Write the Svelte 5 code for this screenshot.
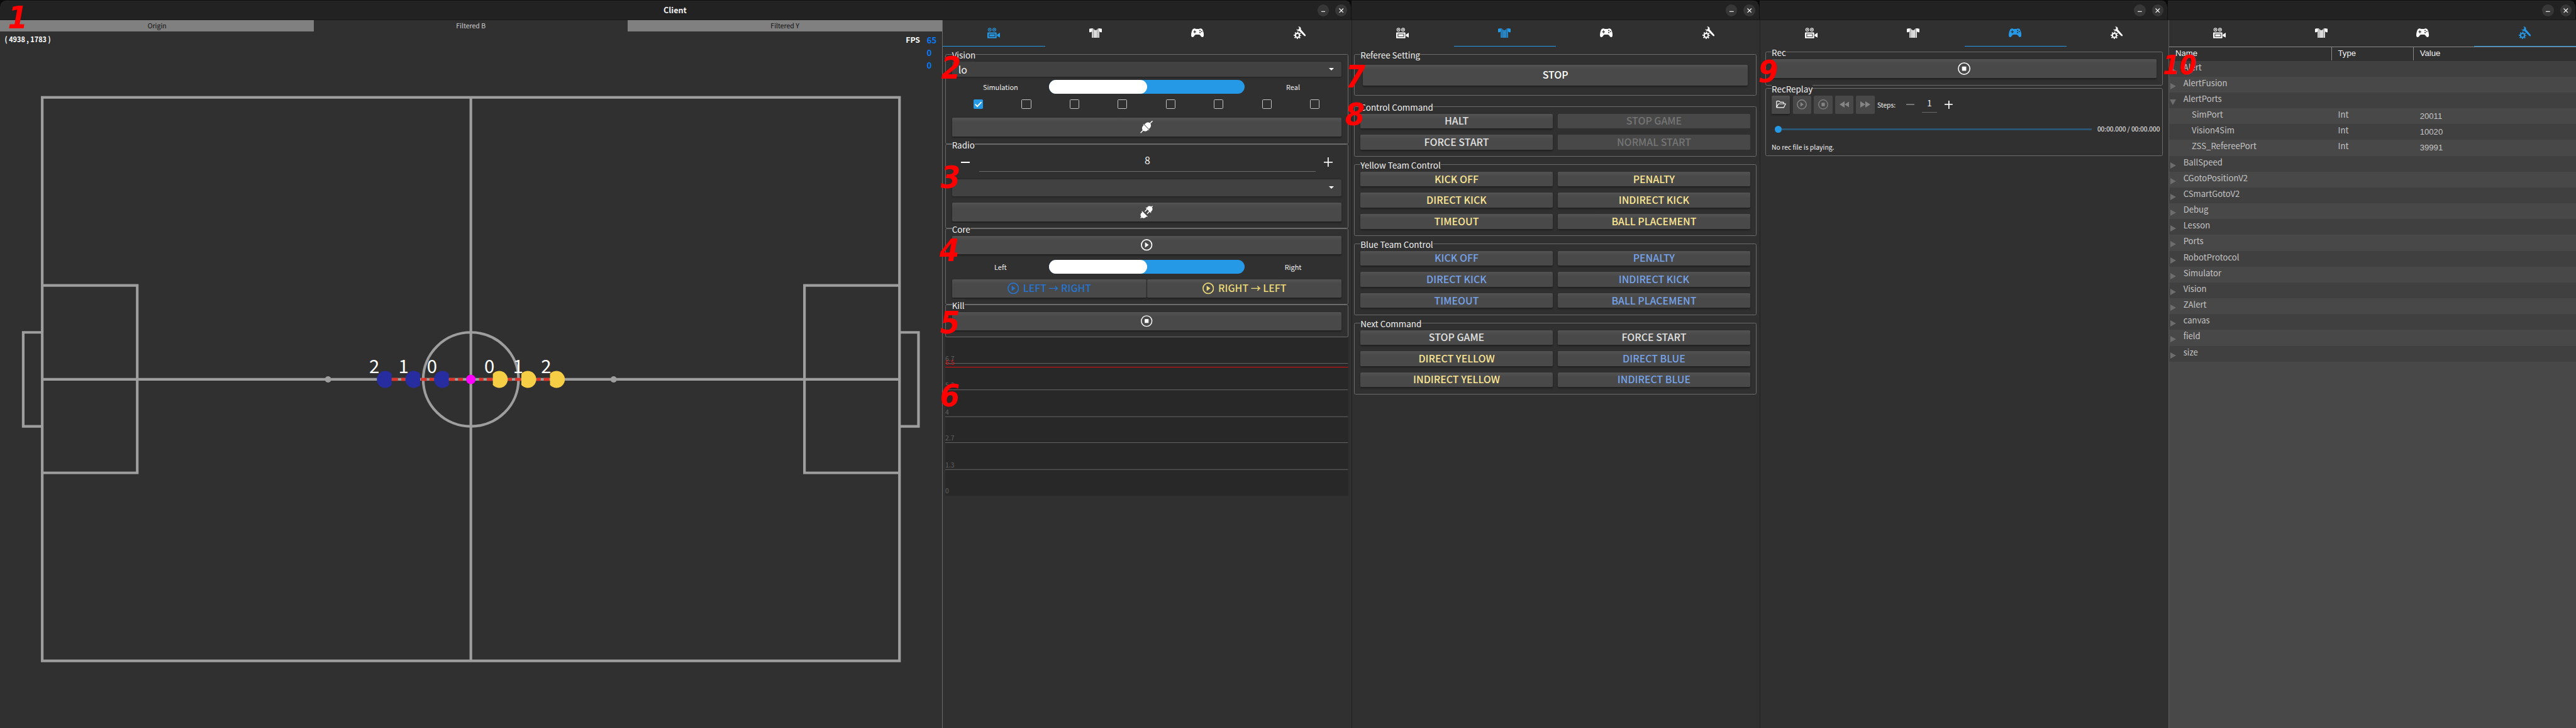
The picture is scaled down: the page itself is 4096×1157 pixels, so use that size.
<script>
  const titles = [
    { cls: 'wide', title: true },
    { cls: 'std', title: false },
    { cls: 'std', title: false },
    { cls: 'std', title: false }
  ];
  const tabIcons = ['camera', 'jersey', 'gamepad', 'tools'];
  const checks = [true, false, false, false, false, false, false, false];

  const refGroups = [
    {
      name: 'Control Command', cls: 'g-control',
      buttons: [['HALT', 'plain'], ['STOP GAME', 'off'], ['FORCE START', 'plain'], ['NORMAL START', 'off']]
    },
    {
      name: 'Yellow Team Control', cls: 'g-team',
      buttons: [['KICK OFF', 'yellow'], ['PENALTY', 'yellow'], ['DIRECT KICK', 'yellow'], ['INDIRECT KICK', 'yellow'], ['TIMEOUT', 'yellow'], ['BALL PLACEMENT', 'yellow']]
    },
    {
      name: 'Blue Team Control', cls: 'g-team',
      buttons: [['KICK OFF', 'blue'], ['PENALTY', 'blue'], ['DIRECT KICK', 'blue'], ['INDIRECT KICK', 'blue'], ['TIMEOUT', 'blue'], ['BALL PLACEMENT', 'blue']]
    },
    {
      name: 'Next Command', cls: 'g-team',
      buttons: [['STOP GAME', 'plain'], ['FORCE START', 'plain'], ['DIRECT YELLOW', 'yellow'], ['DIRECT BLUE', 'blue'], ['INDIRECT YELLOW', 'yellow'], ['INDIRECT BLUE', 'blue']]
    }
  ];

  const tree = [
    { n: 'Alert' }, { n: 'AlertFusion' }, { n: 'AlertPorts', open: true },
    { n: 'SimPort', t: 'Int', v: '20011' }, { n: 'Vision4Sim', t: 'Int', v: '10020' }, { n: 'ZSS_RefereePort', t: 'Int', v: '39991' },
    { n: 'BallSpeed' }, { n: 'CGotoPositionV2' }, { n: 'CSmartGotoV2' }, { n: 'Debug' }, { n: 'Lesson' }, { n: 'Ports' },
    { n: 'RobotProtocol' }, { n: 'Simulator' }, { n: 'Vision' }, { n: 'ZAlert' }, { n: 'canvas' }, { n: 'field' }, { n: 'size' }
  ];

  const robots = [
    { x: 729.7, id: 2, lx: 709, team: 'b' }, { x: 783.7, id: 1, lx: 764.5, team: 'b' }, { x: 838, id: 0, lx: 818.5, team: 'b' },
    { x: 946, id: 0, lx: 927, team: 'y' }, { x: 1000, id: 1, lx: 981.5, team: 'y' }, { x: 1054.3, id: 2, lx: 1034.5, team: 'y' }
  ];
  const dashes = [[742, 12], [760, 8], [797.5, 11], [813.5, 8.5], [851, 11], [867.5, 9.5], [907.5, 8.5], [922, 11.5], [962, 8], [976, 11], [1016, 8.5], [1030, 11]];

  const levels = [[49.5, '6.7'], [99.5, '5.3'], [150.5, '4'], [199.5, '2.7'], [250.5, '1.3'], [300, '0']];

  const marks = [
    { t: '1', x: 15, y: 54 }, { t: '2', x: 1783, y: 149 }, { t: '3', x: 1782, y: 356 }, { t: '4', x: 1780, y: 494 },
    { t: '5', x: 1781, y: 632 }, { t: '6', x: 1781, y: 770 }, { t: '7', x: 2549, y: 166 }, { t: '8', x: 2548, y: 237 },
    { t: '9', x: 3331, y: 156 }, { t: '10', x: 4097, y: 140, small: true }
  ];
</script>

{#snippet icon(name)}
  {#if name === 'camera'}
    <svg class="ic" width="24" height="20" viewBox="0 0 24 20">
      <g fill="none" stroke="currentColor"><circle cx="4.4" cy="3.7" r="2.9" stroke-width="1.3" /><circle cx="13" cy="3.7" r="2.9" stroke-width="1.3" /></g>
      <g fill="currentColor"><circle cx="4.4" cy="3.7" r="1.2" /><circle cx="13" cy="3.7" r="1.2" />
      <path fill-rule="evenodd" d="M1 9h15.500q1 0 1 1v9q0 1-1 1H1q-1 0-1-1v-9q0-1 1-1zM2.800 11.300v6.400h12.200v-6.400zM4 12.500h9.800v4H4z" />
      <path d="M18.300 13l5.700-3.500v9.500l-5.700-3.200z" /></g>
    </svg>
  {:else if name === 'jersey'}
    <svg class="ic" width="24" height="18" viewBox="0 0 24 18">
      <g fill="currentColor"><path d="M0 1L5 0v6L3 7.500H0z" /><path d="M24 1L19 0v6l2 1.500h3z" />
      <path d="M5.200 .2L6.800 0v18H5.200z" /><path d="M18.800 .2L17.200 0v18h1.600z" />
      <path d="M8.400 1.400l1.800 2V18H8.400zM11.100 3.500h1.800V18h-1.800zM15.600 1.400l-1.800 2V18h1.800z" /></g>
      <path fill="currentColor" opacity=".4" d="M5 .3L7.500 0 10 3.300h4L16.500 0l2.500.3V18H5z" />
    </svg>
  {:else if name === 'gamepad'}
    <svg class="ic" width="24" height="17" viewBox="0 0 24 17">
      <path fill="currentColor" fill-rule="evenodd" d="M3.200 1.600C5 .2 7.500-.2 9 1.300h6C16.500-.2 19 .2 20.800 1.600 22.500 4 24 9 24 13c0 3-2 4.500-4 3.500-1.700-1.200-2.500-4-4.500-4.700h-7C6.500 12.500 5.700 15.300 4 16.500 2 17.500 0 16 0 13 0 9 1.500 4 3.200 1.600zM6.100 4v1.900H4.200v1.400h1.900v1.900h1.400V7.300h1.900V5.900H7.500V4zM16.800 3a1.100 1.100 0 1 0 .01 0zM16.800 7a1.100 1.100 0 1 0 .01 0zM20 5a1.100 1.100 0 1 0 .01 0z" />
    </svg>
  {:else if name === 'tools'}
    <svg class="ic" width="23" height="24" viewBox="0 0 23 24">
      <circle cx="7.200" cy="17" r="3.900" fill="none" stroke="currentColor" stroke-width="2.600" />
      <circle cx="7.200" cy="17" r="6" fill="none" stroke="currentColor" stroke-width="2.200" stroke-dasharray="2.300 2.412" stroke-dashoffset="1.150" />
      <path fill="currentColor" d="M8.500.5C11 0 13.500 1.500 13.800 4.200l-.2 1.600L22.600 16q.8 1.400-.3 2.200-1.200.6-2.200-.2L10.600 8.500C8 9 5.800 7.600 5.300 5.200L8 6.200l2.200-1.400.2-2.600z" />
    </svg>
  {:else if name === 'plugOn'}
    <svg class="ic" width="24" height="24" viewBox="0 0 24 24">
      <g transform="translate(12 11.500) rotate(-45)" fill="currentColor" stroke="currentColor">
        <path d="M-16 0H-7M7 0H16" stroke-width="1.700" />
        <path stroke="none" d="M-.5-8v16h-1V6H-3.500C-7 6-9.500 3-9.500 0S-7-6-3.500-6h2V-8z" />
        <path stroke="none" d="M.4-6H3C7-6 9.500-3 9.500 0S7 6 3 6H.4z" />
      </g>
    </svg>
  {:else if name === 'plugOff'}
    <svg class="ic" width="24" height="24" viewBox="0 0 24 24">
      <g transform="translate(12 12) rotate(-45)" fill="currentColor" stroke="currentColor">
        <path d="M-16 0h4M12 0h4" stroke-width="1.700" />
        <path stroke="none" d="M-4.500-7.500v15h-1.200V5.800H-8C-11.500 5.800-13.500 3-13.500 0S-11.500-5.800-8-5.800h2.300v-1.700z" />
        <path stroke="none" d="M4.500-7v14h1.200V5.500H8c3.500 0 5.500-2.500 5.500-5.500S11.500-5.500 8-5.500H5.700V-7z" />
        <path d="M-1.500-3H5M-1.500 3H5" stroke-width="1.800" />
      </g>
    </svg>
  {:else if name === 'play'}
    <svg class="ic" width="22" height="22" viewBox="0 0 22 22">
      <circle cx="11" cy="11" r="9.900" fill="none" stroke="currentColor" stroke-width="2" /><path fill="currentColor" d="M8 6l7 5-7 5z" />
    </svg>
  {:else if name === 'stop'}
    <svg class="ic" width="22" height="22" viewBox="0 0 22 22">
      <circle cx="11" cy="11" r="10" fill="none" stroke="currentColor" stroke-width="1.700" /><rect x="7.300" y="7.300" width="7.400" height="7.400" rx="1" fill="currentColor" />
    </svg>
  {:else if name === 'folder'}
    <svg class="ic" width="19" height="14" viewBox="0 0 19 14">
      <path fill="none" stroke="currentColor" stroke-width="1.400" stroke-linejoin="round" d="M1 12.800V2q0-1.200 1.200-1.200h3.600l2 2h5.700q1 0 1 1v2M1 12.800L4.600 6h13.600L14.500 13H1.600z" />
    </svg>
  {:else if name === 'back'}
    <svg class="ic" width="19" height="12" viewBox="0 0 19 12"><path fill="currentColor" d="M9.500 0v12L0 6zM19 0v12L9.500 6z" /></svg>
  {:else if name === 'fwd'}
    <svg class="ic" width="19" height="12" viewBox="0 0 19 12"><path fill="currentColor" d="M0 0v12l9.500-6zM9.500 0v12L19 6z" /></svg>
  {/if}
{/snippet}

{#snippet tabs(active)}
  <nav class="tabs">
    {#each tabIcons as t, i}
      <div class="tab" class:active={i === active}>{@render icon(t)}</div>
    {/each}
  </nav>
{/snippet}

{#snippet toggle(left, right)}
  <div class="toggle-row"><span>{left}</span><div class="toggle"><div class="thumb"></div></div><span>{right}</span></div>
{/snippet}

<div class="screen">
  <header class="titles">
    {#each titles as w}
      <div class="titlebar {w.cls}">
        {#if w.title}<span class="title">Client</span>{/if}
        <div class="winbtns">
          <span class="wb"><svg width="8" height="10" viewBox="0 0 8 10"><path d="M0 7.500h8" stroke="#fff" stroke-width="1.300" /></svg></span>
          <span class="wb"><svg width="9" height="9" viewBox="0 0 9 9"><path d="M.6.6l7.800 7.800M8.400.6L.6 8.400" stroke="#fff" stroke-width="1.400" /></svg></span>
        </div>
      </div>
    {/each}
  </header>

  <main class="body">
    <section class="field">
      <div class="views"><div>Origin</div><div class="sel">Filtered B</div><div>Filtered Y</div></div>
      <svg class="pitch" width="1785" height="1321" viewBox="0 58 1785 1321">
        <g fill="none" stroke="#9e9e9e" stroke-width="5">
          <rect x="80" y="184" width="1624" height="1067" />
          <path d="M892 184V1251M80 718H1704M80 540H260V895H80M1704 540H1524V895H1704M80 629H44V807H80M1704 629H1740V807H1704" />
          <ellipse cx="892" cy="718" rx="90.300" ry="89" />
        </g>
        <circle cx="621.500" cy="718" r="6" fill="#9e9e9e" /><circle cx="1162.500" cy="718" r="6" fill="#9e9e9e" />
        {#each dashes as d}<rect x={d[0]} y="715.200" width={d[1]} height="5.600" fill="#dd352c" />{/each}
        {#each robots as r}
          {#if r.team === 'b'}
            <path fill="#272c9e" d="M{r.x + 12.3} 707.500A16 16 0 1 0 {r.x + 12.3} 728.500Z" />
          {:else}
            <path fill="#f5ce46" d="M{r.x - 12.3} 707.500A16 16 0 1 1 {r.x - 12.3} 728.500Z" />
          {/if}
          <text x={r.lx} y="706" class="rid">{r.id}</text>
        {/each}
        <circle cx="892" cy="718" r="9" fill="#f0f" />
        <text x="9" y="80" class="info" textLength="87" lengthAdjust="spacingAndGlyphs">( 4938 , 1783 )</text>
        <text x="1716" y="81" class="info">FPS</text>
        <text x="1755.500" y="82" class="num">65</text><text x="1755.500" y="106" class="num">0</text><text x="1755.500" y="130" class="num">0</text>
      </svg>
    </section>

    <section class="panel p1">
      {@render tabs(0)}
      <div class="group g-vision">
        <span class="legend">Vision</span>
        <div class="combo c1"><span>lo</span><i class="caret"></i></div>
        {@render toggle('Simulation', 'Real')}
        <div class="checks">
          {#each checks as c}
            <div class="cell"><span class="box" class:on={c}>{#if c}<svg width="18" height="18" viewBox="0 0 18 18"><path d="M3.200 9.200l3.900 4L15 5" fill="none" stroke="#fff" stroke-width="2.200" /></svg>{/if}</span></div>
          {/each}
        </div>
        <button class="btn h36">{@render icon('plugOn')}</button>
      </div>
      <div class="group g-radio">
        <span class="legend">Radio</span>
        <div class="spin">
          <span class="minus"></span><span class="val">8</span><span class="plus"></span>
        </div>
        <div class="combo c2"><span></span><i class="caret"></i></div>
        <button class="btn h36">{@render icon('plugOff')}</button>
      </div>
      <div class="group g-core">
        <span class="legend">Core</span>
        <button class="btn h34">{@render icon('play')}</button>
        {@render toggle('Left', 'Right')}
        <div class="pair">
          <button class="btn h34 dblue">{@render icon('play')}<span>LEFT → RIGHT</span></button>
          <button class="btn h34 dyellow">{@render icon('play')}<span>RIGHT → LEFT</span></button>
        </div>
      </div>
      <div class="group g-kill">
        <span class="legend">Kill</span>
        <button class="btn h34">{@render icon('stop')}</button>
      </div>
      <svg class="chart" width="763" height="300" viewBox="0 0 763 300">
        {#each levels as l}
          <text x="0" y={l[0] - 4} class="lv">{l[1]}</text>
          {#if l[1] !== '0'}<path d="M0 {l[0]}H763" stroke="#636363" stroke-width="1.200" />{/if}
        {/each}
        <text x="0" y="53" class="lv cur">6.5</text>
        <path d="M0 56.500H763" stroke="#e01010" stroke-width="1.200" />
      </svg>
    </section>

    <section class="panel p2">
      {@render tabs(1)}
      <div class="group g-ref">
        <span class="legend">Referee Setting</span>
        <button class="btn stopbtn">STOP</button>
      </div>
      {#each refGroups as g}
        <div class="group {g.cls}">
          <span class="legend">{g.name}</span>
          <div class="cmds">
            {#each g.buttons as b}<button class="btn {b[1]}">{b[0]}</button>{/each}
          </div>
        </div>
      {/each}
    </section>

    <section class="panel p3">
      {@render tabs(2)}
      <div class="group g-rec">
        <span class="legend">Rec</span>
        <button class="btn h36 bigic">{@render icon('stop')}</button>
      </div>
      <div class="group g-replay">
        <span class="legend">RecReplay</span>
        <div class="tools">
          <button class="btn sq">{@render icon('folder')}</button>
          <button class="btn sq off round">{@render icon('play')}</button>
          <button class="btn sq off round">{@render icon('stop')}</button>
          <button class="btn sq off">{@render icon('back')}</button>
          <button class="btn sq off">{@render icon('fwd')}</button>
          <span class="steps">Steps:</span>
          <span class="minus dim"></span><span class="one">1</span><span class="plus sm"></span>
        </div>
        <div class="seek"><span class="knob"></span><span class="track"></span><span class="time">00:00.000 / 00:00.000</span></div>
        <div class="status">No rec file is playing.</div>
      </div>
    </section>

    <section class="panel p4">
      {@render tabs(3)}
      <div class="row head"><span>Name</span><span>Type</span><span>Value</span></div>
      {#each tree as r}
        <div class="row" class:child={r.v}>
          <span class="name">{#if !r.v}<i class={r.open ? 'down' : 'right'}></i>{/if}{r.n}</span>
          <span>{r.t ?? ''}</span><span class="v">{r.v ?? ''}</span>
        </div>
      {/each}
    </section>
  </main>

  <svg class="marks" width="4880" height="1379" viewBox="0 0 4880 1379">
    {#each marks as m}<text x={m.x} y={m.y} class:small={m.small}>{m.t}</text>{/each}
  </svg>
</div>

<style>
  :global(body) { background: #303030; overflow: hidden; }
  * { box-sizing: border-box; }
  .screen { position: relative; width: 4880px; height: 1379px; zoom: 0.83934; background: #303030; overflow: hidden; color: #f2f2f2; font-family: "Noto Sans CJK SC", "Noto Sans", sans-serif; font-size: 16px; display: flex; flex-direction: column; }
  .titles { display: flex; height: 38px; background: #0a0a0a; padding-top: 1px; }
  .titlebar { display: flex; align-items: center; justify-content: flex-end; height: 37px; background: #222; border-bottom: 1px solid #161616; border-top: 1px solid #2b2b2b; border-right: 1px solid #111; border-radius: 0 12px 0 0; padding-right: 7px; }
  .wide { width: 2560px; border-top-left-radius: 12px; }
  .std { flex: 1; }
  .title { flex: 1; text-align: center; padding-left: 62px; font-weight: 700; font-size: 15px; line-height: 20px; }
  .winbtns { display: flex; gap: 12px; }
  .wb { width: 22px; height: 22px; border-radius: 50%; background: #373737; display: flex; align-items: center; justify-content: center; }
  .body { display: flex; height: 1341px; }
  .field { width: 1785px; display: flex; flex-direction: column; }
  .views { display: grid; grid-template-columns: 595px 594px 596px; height: 20px; text-align: center; font-size: 12.500px; line-height: 21px; color: #111; }
  .views div { background: #808080; }
  .views .sel { background: #303030; color: #ccc; }
  .pitch { display: block; }
  .rid { fill: #fff; font-size: 35px; text-anchor: middle; }
  .info { fill: #fff; font-size: 14.500px; font-weight: 700; }
  .num { fill: #0a78f0; font-size: 16px; font-weight: 700; }

  .panel { display: flex; flex-direction: column; border-left: 1px solid #202020; }
  .p1 { width: 775px; border-left-color: #6a6a6a; }
  .p2 { width: 774px; }
  .p3 { width: 774px; }
  .p4 { width: 772px; background: #484848; border-left-color: #5c5c5c; }
  .tabs { display: flex; height: 50px; background: #303030; flex: none; }
  .tab { flex: 1; display: flex; align-items: center; justify-content: center; border-bottom: 2px solid transparent; color: #fff; }
  .tab .ic { margin-right: 2px; }
  .tab.active { color: #2699e6; border-bottom-color: #2699e6; }
  .ic { display: block; flex: none; }

  .group { position: relative; border: 1px solid #6b6b6b; border-radius: 3px; flex: none; display: flex; flex-direction: column; padding: 13px 11px 0; }
  .legend { position: absolute; top: -12px; left: 11px; height: 24px; line-height: 25px; font-size: 16px; background: #303030; }
  .p1 .group { margin: 0 6px 0 5px; }
  .btn { font: inherit; font-size: 19px; font-weight: 500; margin: 0; padding: 0; border: 0; border-radius: 2px; color: #fff; background: linear-gradient(#535353, #494949 9px, #494949); box-shadow: 0 2px 3px rgba(0, 0, 0, .35); display: flex; align-items: center; justify-content: center; line-height: 24px; white-space: nowrap; }
  .h36 { height: 36px; }
  .h34 { height: 34px; }
  .combo { display: flex; align-items: center; justify-content: space-between; background: #414141; border-radius: 2px; box-shadow: 0 1px 3px rgba(0, 0, 0, .4); padding: 0 15px 0 12px; font-size: 19px; flex: none; }
  .c1 { height: 28px; }
  .c2 { height: 32px; }
  .caret { border: 5px solid transparent; border-top-color: #fff; border-bottom: 0; }
  .toggle-row { display: grid; grid-template-columns: 184px 370px 1fr; text-align: center; font-size: 13px; line-height: 27px; height: 26px; flex: none; }
  .toggle { background: #2699e6; border-radius: 13px; height: 26px; }
  .thumb { background: #fff; width: 186px; height: 26px; border-radius: 13px; }
  .g-vision { margin-top: 15px !important; height: 170px; }
  .g-vision .toggle-row { margin-top: 6px; }
  .checks { display: flex; margin: 11px -1px 17px 5px; height: 18px; }
  .cell { width: 91.100px; padding-left: 36px; }
  .box { display: block; width: 18px; height: 18px; border: 1.500px solid #c4c4c4; border-radius: 2px; }
  .box.on { background: #2699e6; border: 0; }
  .box svg { display: block; }
  .g-radio { height: 160px; }
  .spin { display: flex; align-items: flex-start; height: 38px; margin: 0 0 14px; flex: none; }
  .spin .val { flex: 1; text-align: center; font-size: 19px; line-height: 34px; height: 38px; margin: 0 16px 0 18px; border-bottom: 1px solid #6b6b6b; }
  .minus { width: 17px; height: 2px; background: #fff; margin: 19px 0 0 17px; flex: none; }
  .plus { width: 17px; height: 18px; margin: 11px 17px 0 0; background: linear-gradient(#fff, #fff) center / 100% 2px no-repeat, linear-gradient(#fff, #fff) center / 2px 100% no-repeat; flex: none; }
  .g-radio .combo { margin-bottom: 12px; }
  .g-core { height: 144px; }
  .g-core .toggle-row { margin: 11px 0; }
  .pair { display: grid; grid-template-columns: 1fr 1fr; gap: 1px; }
  .pair .btn { gap: 8px; }
  .dblue { color: #2674cf; }
  .dyellow { color: #ecd977; }
  .g-kill { height: 62px; }
  .chart { background: #282828; margin-left: 5px; display: block; }
  .lv { font-size: 12.500px; fill: #616161; }
  .lv.cur { fill: #c81818; }

  .p2 .group { margin: 0 6px 0 4px; }
  .g-ref { margin-top: 15px !important; height: 78px; padding: 18px 16px 0 16px; }
  .stopbtn { height: 40px; }
  .g-control { margin-top: 20px !important; height: 96px; }
  .g-team { margin-top: 14px !important; height: 136px; }
  .cmds { display: grid; grid-template-columns: 364px 364px; gap: 12px 10px; grid-auto-rows: 28px; }
  .plain { color: #e0e0e0; }
  .yellow { color: #fbe694; }
  .blue { color: #76a2e8; }
  .off { color: #757575; box-shadow: none; background: #484848; }

  .p3 .group { margin: 0 11px 0 9px; }
  .g-rec { margin-top: 10px !important; height: 64px; }
  .g-replay { margin-top: 5px !important; height: 128px; }
  .bigic .ic { width: 24px; height: 24px; }
  .tools { display: flex; height: 34px; gap: 5px; font-size: 12.200px; }
  .sq { width: 35px; height: 34px; flex: none; }
  .sq.off { color: #858585; }
  .round .ic { width: 19px; height: 19px; }
  .steps { line-height: 35px; width: 35px; white-space: nowrap; flex: none; }
  .minus.dim { background: #757575; width: 15px; margin: 16px 10px 0 15px; }
  .one { width: 28px; height: 32px; line-height: 27px; text-align: center; font-size: 16px; border-bottom: 1px solid #6b6b6b; }
  .plus.sm { width: 15px; height: 16px; margin: 9px 0 0 10px; }
  .seek { display: flex; align-items: center; height: 20px; margin-top: 20px; padding-left: 6px; }
  .knob { width: 13px; height: 13px; border-radius: 50%; background: #2699e6; flex: none; }
  .track { width: 587px; height: 4px; background: #2c5571; flex: none; }
  .time { margin-left: 11px; font-size: 12.200px; line-height: 20px; white-space: nowrap; }
  .status { font-size: 12.400px; line-height: 20px; margin-top: 14px; }

  .row { display: grid; grid-template-columns: 308px 155px 1fr; height: 30px; flex: none; line-height: 25px; font-size: 15.700px; color: #c4c4c4; }
  .row:nth-child(odd) { background: #404040; }
  .row:nth-child(even) { background: #484848; }
  .row span { padding-left: 12px; white-space: nowrap; }
  .row .name { position: relative; padding-left: 27px; }
  .child .name { padding-left: 43px; }
  .row.child .v { font-family: "Liberation Sans", sans-serif; line-height: 30px; }
  .row.head { height: 27px; background: #303030; color: #f2f2f2; font-family: "Liberation Sans", sans-serif; line-height: 25px; }
  .head span { border-top: 1px solid #8a8a8a; border-right: 1px solid #8a8a8a; height: 26px; }
  .head span:last-child { border-right: 0; }
  .right { position: absolute; left: 2px; top: 12px; border: 6.500px solid transparent; border-left: 11px solid #6d6d6d; border-right: 0; }
  .down { position: absolute; left: 1px; top: 13px; border: 6.500px solid transparent; border-top: 11px solid #6d6d6d; border-bottom: 0; }

  .marks { position: absolute; left: 0; top: 0; pointer-events: none; }
  .marks text { fill: #f00; font-family: "DejaVu Sans Condensed", "DejaVu Sans", sans-serif; font-stretch: condensed; font-size: 60px; font-weight: 700; font-style: italic; }
  .marks .small { font-size: 51px; }
</style>
